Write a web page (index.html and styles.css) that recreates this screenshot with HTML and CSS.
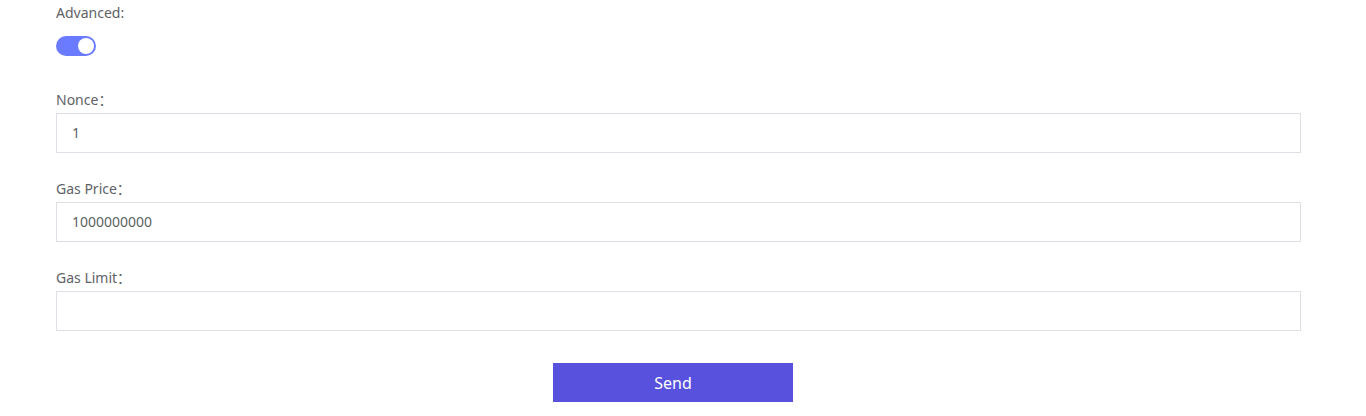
FILE: index.html
```html
<!DOCTYPE html>
<html>
<head>
<meta charset="utf-8">
<link rel="stylesheet" href="styles.css">
</head>
<body>
<div class="form">
  <div class="label adv">Advanced:</div>
  <div class="switch"><span class="knob"></span></div>

  <div class="field first">
    <div class="label">Nonce：</div>
    <div class="input">1</div>
  </div>
  <div class="field">
    <div class="label">Gas Price：</div>
    <div class="input">1000000000</div>
  </div>
  <div class="field">
    <div class="label">Gas Limit：</div>
    <div class="input"></div>
  </div>
  <div class="actions">
    <button class="send">Send</button>
  </div>
</div>
</body>
</html>
```
FILE: styles.css
```css
html, body {
  margin: 0;
  padding: 0;
  background: #fff;
}
body {
  font-family: "Noto Sans", "Noto Sans CJK SC", sans-serif;
  color: #606266;
  font-size: 14px;
}
.form {
  padding: 3px 65px 0 56px;
  display: flex;
  flex-direction: column;
}
.label {
  line-height: 20px;
  height: 20px;
  color: #606266;
}
.adv {
  margin-bottom: 13px;
}
.switch {
  width: 40px;
  height: 20px;
  border-radius: 10px;
  background: #6b7bff;
  display: flex;
  align-items: center;
  justify-content: flex-end;
  padding-right: 2px;
  box-sizing: border-box;
}
.knob {
  width: 16px;
  height: 16px;
  border-radius: 50%;
  background: #fff;
}
.field {
  display: flex;
  flex-direction: column;
  gap: 3px;
  margin-top: 26px;
}
.field.first {
  margin-top: 34px;
}
.input {
  height: 38px;
  border: 1px solid #dcdfe6;
  padding-left: 15px;
  line-height: 38px;
  color: #606266;
}
.actions {
  display: flex;
  justify-content: center;
  margin-top: 32px;
  padding-right: 11px;
}
.send {
  width: 240px;
  height: 39px;
  border: none;
  background: #5851de;
  color: #fff;
  font-family: "Noto Sans", sans-serif;
  font-size: 16px;
  cursor: pointer;
}
```
